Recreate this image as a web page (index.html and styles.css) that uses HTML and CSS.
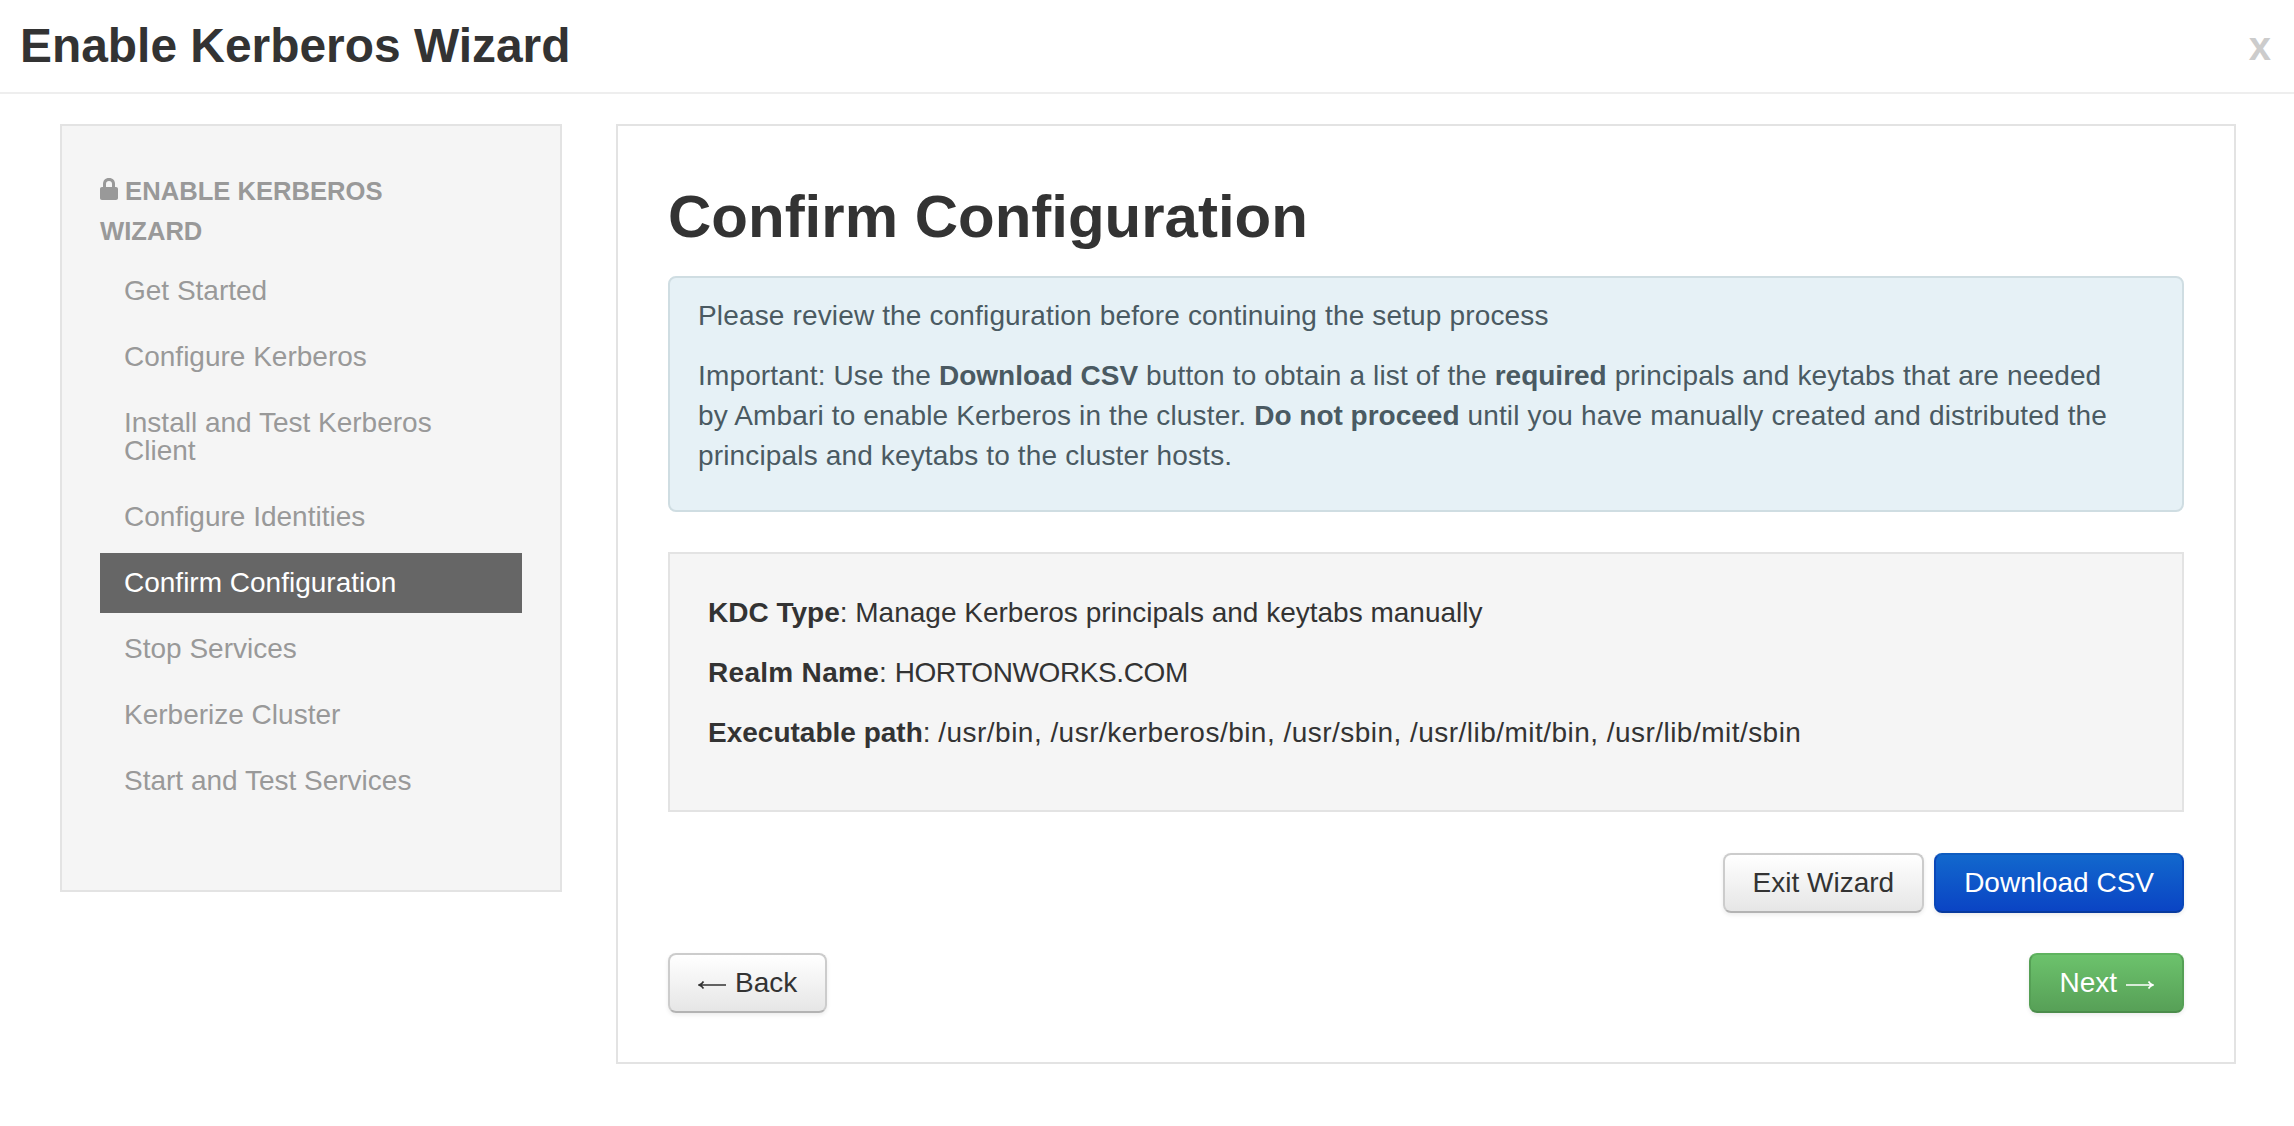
FILE: index.html
```html
<!DOCTYPE html>
<html lang="en">
<head>
<meta charset="utf-8">
<title>Enable Kerberos Wizard</title>
<link rel="stylesheet" href="styles.css">
</head>
<body>
<header class="modal-header">
  <h1 class="modal-title">Enable Kerberos Wizard</h1>
  <span class="close">x</span>
</header>
<div class="wizard">
  <aside class="sidebar">
    <div class="nav-head"><svg class="lock" viewBox="0 0 18 22" aria-hidden="true"><path fill-rule="evenodd" d="M9 0C5 0 3 2.600 3 6V9H2C.8 9 0 9.800 0 11V20C0 21.200 .8 22 2 22H16C17.200 22 18 21.200 18 20V11C18 9.800 17.200 9 16 9H15V6C15 2.600 13 0 9 0ZM9 3C11.200 3 12 4.400 12 6V9H6V6C6 4.400 6.800 3 9 3Z"/></svg> ENABLE KERBEROS WIZARD</div>
    <ul class="steps">
      <li class="step">Get Started</li>
      <li class="step">Configure Kerberos</li>
      <li class="step">Install and Test Kerberos Client</li>
      <li class="step">Configure Identities</li>
      <li class="step active">Confirm Configuration</li>
      <li class="step">Stop Services</li>
      <li class="step">Kerberize Cluster</li>
      <li class="step">Start and Test Services</li>
    </ul>
  </aside>
  <main class="content">
    <h2 class="page-title">Confirm Configuration</h2>
    <section class="alert">
      <p>Please review the configuration before continuing the setup process</p>
      <p>Important: Use the <b>Download CSV</b> button to obtain a list of the <b>required</b> principals and keytabs that are needed by Ambari to enable Kerberos in the cluster. <b>Do not proceed</b> until you have manually created and distributed the principals and keytabs to the cluster hosts.</p>
    </section>
    <section class="well">
      <p><b>KDC Type</b>: Manage Kerberos principals and keytabs manually</p>
      <p><b class="realm-label">Realm Name</b>: <span class="realm">HORTONWORKS.COM</span></p>
      <p><b>Executable path</b>: <span class="paths">/usr/bin, /usr/kerberos/bin, /usr/sbin, /usr/lib/mit/bin, /usr/lib/mit/sbin</span></p>
    </section>
    <div class="actions">
      <button class="btn">Exit Wizard</button>
      <button class="btn btn-primary">Download CSV</button>
    </div>
    <div class="pager">
      <button class="btn"><svg class="arrow" viewBox="0 0 28 10" aria-hidden="true"><path d="M28 5H2M5.500 1.500C4.500 3.200 3 4.400 1 5C3 5.600 4.500 6.800 5.500 8.500"/></svg>Back</button>
      <button class="btn btn-success">Next<svg class="arrow arrow-right" viewBox="0 0 28 10" aria-hidden="true"><path d="M0 5H26M22.500 1.500C23.500 3.200 25 4.400 27 5C25 5.600 23.500 6.800 22.500 8.500"/></svg></button>
    </div>
  </main>
</div>
</body>
</html>
```
FILE: styles.css
```css
* { box-sizing: border-box; }
html, body { margin: 0; padding: 0; }
body {
  width: 2294px;
  height: 1126px;
  overflow: hidden;
  background: #fff;
  color: #333;
  font-family: "Liberation Sans", Arial, sans-serif;
  font-size: 28px;
  line-height: 40px;
}
.modal-header {
  height: 94px;
  padding: 0 23px 0 20px;
  display: flex;
  align-items: center;
  justify-content: space-between;
  border-bottom: 2px solid #eee;
}
.modal-title { margin: 0; font-size: 47.900px; line-height: 60px; font-weight: 700; color: #333; }
.close { font-size: 40px; font-weight: 700; color: #ccc; line-height: 40px; }
.wizard {
  display: flex;
  align-items: flex-start;
  gap: 54px;
  padding: 30px 0 0 60px;
}
.sidebar {
  width: 502px;
  height: 768px;
  flex: none;
  padding: 45px 38px 0 38px;
  background: #f5f5f5;
  border: 2px solid #e3e3e3;
}
.nav-head { padding-right: 40px; font-size: 25.600px; font-weight: 700; color: #999; line-height: 40px; }
.lock { width: 18px; height: 22px; fill: #999; }
.steps { list-style: none; margin: 10px 0 0; padding: 0; }
.step { padding: 16px 24px; margin-top: 6px; line-height: 28px; color: #999; }
.step.active { background: #666; color: #fff; }
.content {
  width: 1620px;
  height: 940px;
  flex: none;
  padding: 50px;
  background: #fff;
  border: 2px solid #e3e3e3;
}
.page-title { margin: 0 0 18px; font-size: 60px; line-height: 82px; font-weight: 700; color: #333; }
.alert {
  height: 236px;
  padding: 18px 70px 14px 28px;
  background: #e6f1f6;
  border: 2px solid #cfdde2;
  border-radius: 8px;
  color: #4a5a62;
  letter-spacing: .15px;
}
.alert b { letter-spacing: 0; }
.alert p { margin: 0 0 20px; }
.well {
  height: 260px;
  margin-top: 40px;
  padding: 39px 38px 38px;
  background: #f5f5f5;
  border: 2px solid #e3e3e3;
}
.well p { margin: 0 0 20px; }
.realm-label { letter-spacing: .3px; }
.realm { letter-spacing: -.4px; }
.paths { letter-spacing: .47px; }
.actions { display: flex; justify-content: flex-end; gap: 10px; margin-top: 41px; }
.pager { display: flex; justify-content: space-between; margin-top: 40px; }
.btn {
  height: 60px;
  padding: 0 28px;
  display: inline-flex;
  align-items: center;
  font: inherit;
  color: #333;
  border: 2px solid #ccc;
  border-bottom-color: #b3b3b3;
  border-radius: 8px;
  background: linear-gradient(#fff, #e6e6e6);
  box-shadow: 0 2px 4px rgba(0,0,0,.08);
}
.btn-primary {
  color: #fff;
  border-color: #0f5cc0 #0a47b8 #083a9e;
  background: linear-gradient(#1268cd, #0a44c4);
}
.btn-success {
  color: #fff;
  border-color: #5fb35f #55a055 #4b8c4b;
  background: linear-gradient(#6cc26c, #57a057);
}
.arrow {
  width: 28px;
  height: 10px;
  margin: 4px 9px 0 0;
  fill: none;
  stroke: currentColor;
  stroke-width: 1.600;
}
.arrow-right { margin: 4px 0 0 9px; }
```
